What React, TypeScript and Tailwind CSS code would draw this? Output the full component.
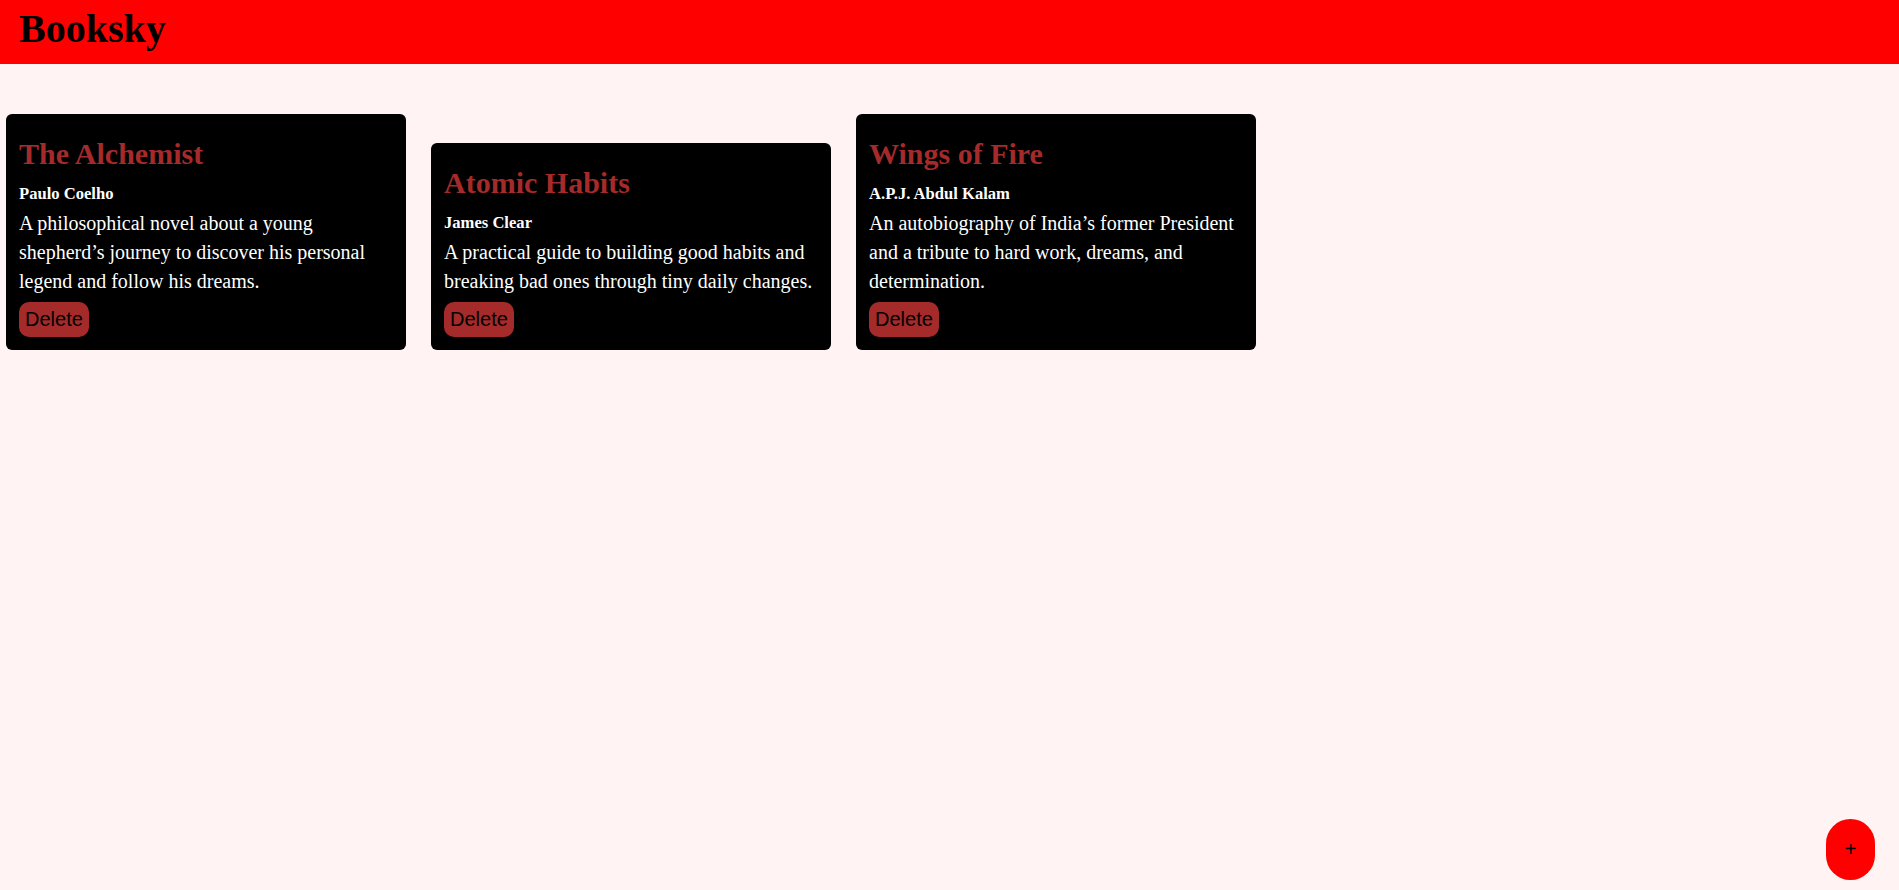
import { JSX } from "react";

interface Book {
  id: number;
  title: string;
  author: string;
  description: string;
}

const books: Book[] = [
  {
    id: 1,
    title: "The Alchemist",
    author: "Paulo Coelho",
    description:
      "A philosophical novel about a young shepherd’s journey to discover his personal legend and follow his dreams.",
  },
  {
    id: 2,
    title: "Atomic Habits",
    author: "James Clear",
    description:
      "A practical guide to building good habits and breaking bad ones through tiny daily changes.",
  },
  {
    id: 3,
    title: "Wings of Fire",
    author: "A.P.J. Abdul Kalam",
    description:
      "An autobiography of India’s former President and a tribute to hard work, dreams, and determination.",
  },
];

const BookCard = ({ book }: { book: Book }): JSX.Element => {
  return (
    <div className="flex w-[400px] flex-col items-start rounded-[6px] bg-black p-[13px] text-[20px]">
      <h2 className="mt-[10.2px] text-[30px] leading-[34px] font-bold text-[#a52a2a]">
        {book.title}
      </h2>
      <h5 className="mt-[13px] text-[16.6px] leading-[19px] font-bold text-white">
        {book.author}
      </h5>
      <p className="mt-[6px] text-[20px] leading-[28.7px] text-white">
        {book.description}
      </p>
      <button className="mt-[7px] rounded-[10px] bg-[#a52a2a] px-[6px] py-[6px] font-['Liberation_Sans',Arial,sans-serif] text-[20px] leading-[22.4px] text-black">
        Delete
      </button>
    </div>
  );
};

export default function App(): JSX.Element {
  return (
    <div className="min-h-[890px] bg-[#fff4f3] font-['Liberation_Serif','Times_New_Roman',serif]">
      <header className="h-[64px] bg-[#ff0000] pt-[7px] pl-[19px]">
        <h1 className="text-[40px] leading-[44px] font-bold text-black">
          Booksky
        </h1>
      </header>

      <main className="flex items-end gap-[25px] pt-[50px] pl-[6px]">
        {books.map((book) => (
          <BookCard key={book.id} book={book} />
        ))}
      </main>

      <button className="fixed right-[24px] bottom-[10px] h-[61px] w-[49px] rounded-full bg-[#ff0000] font-['Liberation_Sans',Arial,sans-serif] text-[20px] leading-[23px] text-black">
        +
      </button>
    </div>
  );
}
